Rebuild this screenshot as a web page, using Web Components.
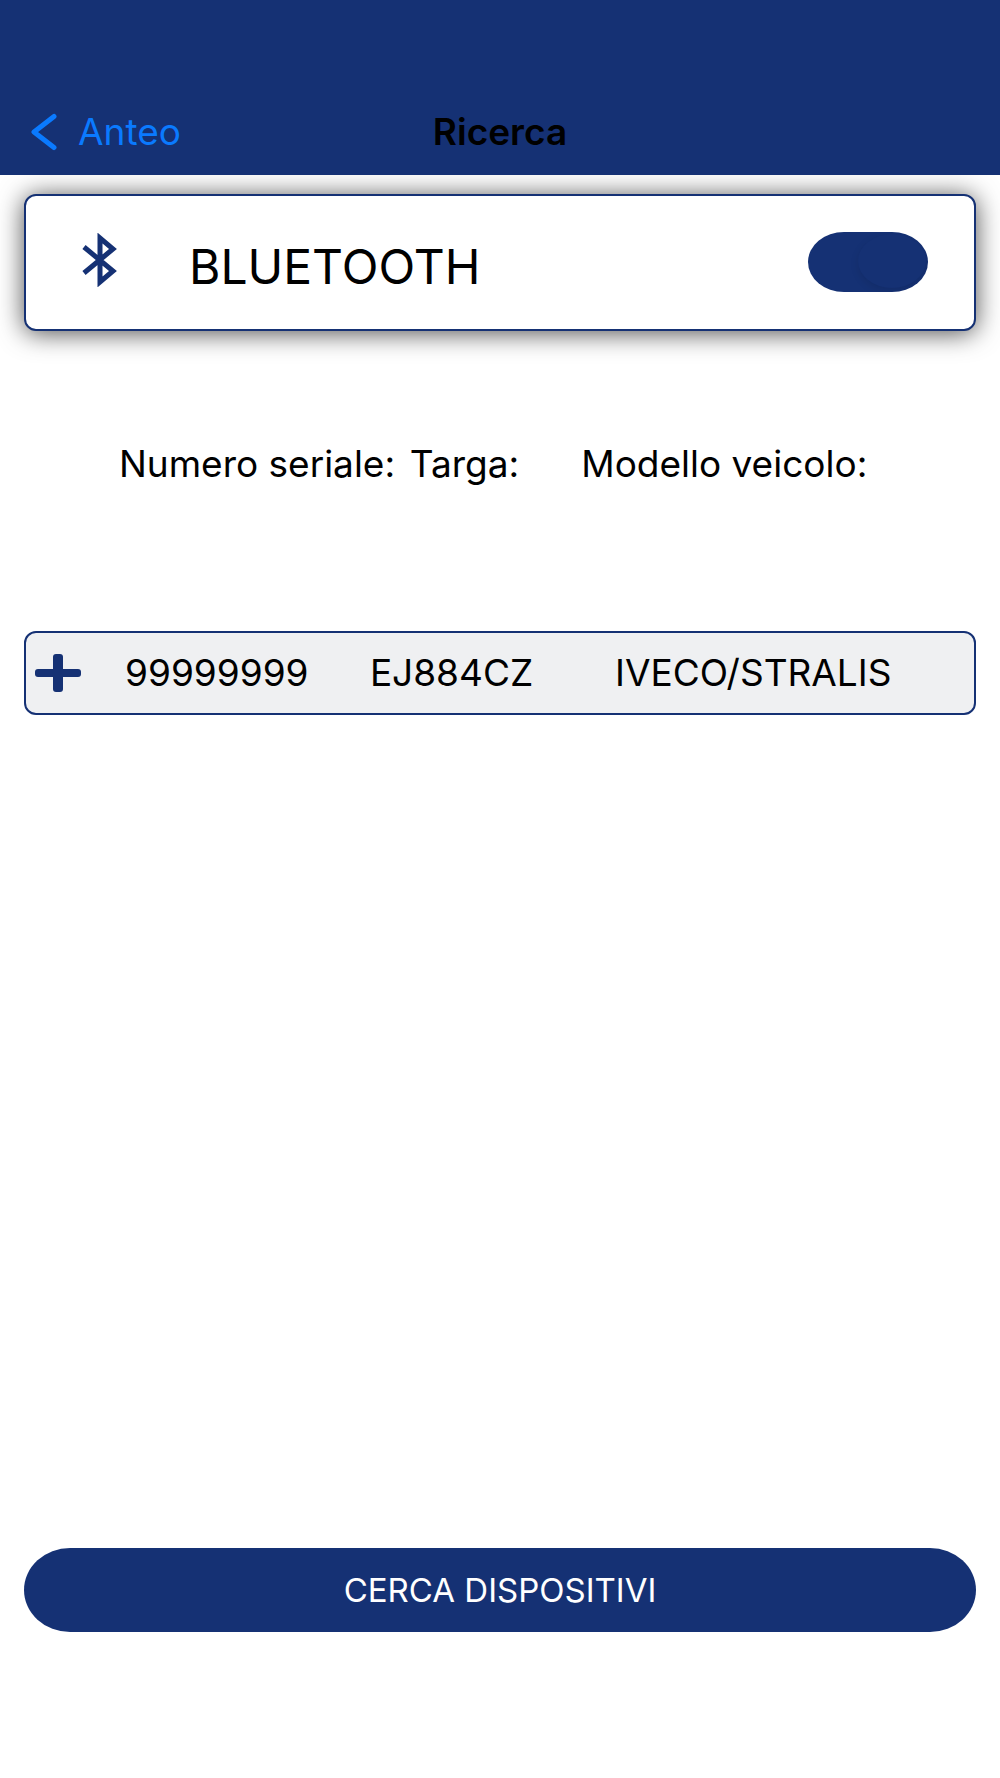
<!doctype html>
<html lang="it">
<head>
<meta charset="utf-8">
<meta name="viewport" content="width=device-width, initial-scale=1">
<title>Ricerca</title>
<style>
html, body {
	height: 100%;
	margin: 0;
}
body {
	--brand: #153174;
	--link: #0a7aff;
	--gutter: 24px;
	background: #fff;
	color: #000;
	font: 37px/40px Inter, "Liberation Sans", sans-serif;
}
</style>
</head>
<body>
<an-screen>
	<an-nav-bar slot="bar" back="Anteo">Ricerca</an-nav-bar>
	<an-bluetooth on>BLUETOOTH</an-bluetooth>
	<an-devices>
		<an-device serial="99999999" plate="EJ884CZ" model="IVECO/STRALIS"></an-device>
	</an-devices>
	<an-action slot="foot">CERCA DISPOSITIVI</an-action>
</an-screen>

<script>
const html = (strings, ...parts) => {
	const tpl = document.createElement('template')
	tpl.innerHTML = String.raw({ raw: strings }, ...parts)
	return tpl
}
const withTemplate = (ele, tpl) => {
	ele.attachShadow({ mode: 'open' }).append(tpl.content.cloneNode(true))
	ele.shadowRoot.querySelectorAll('[id]')
		.forEach(e => Object.defineProperty(ele, `$${e.id}`, { value: e }))
}

const screen = html`
<style>
:host {
	display: flex;
	flex-direction: column;
	min-height: 100%;
}
main {
	display: flex;
	flex: 1;
	flex-direction: column;
	gap: 113px;
	padding: 19px var(--gutter);
}
footer { padding: 0 var(--gutter) 146px; }
</style>
<slot name="bar"></slot>
<main><slot></slot></main>
<footer><slot name="foot"></slot></footer>`

customElements.define('an-screen', class extends HTMLElement {
	constructor() {
		super()
		withTemplate(this, screen)
	}
})

const navBar = html`
<style>
:host {
	display: block;
	position: relative;
	z-index: 1;
	background: var(--brand);
}
header {
	display: grid;
	grid-template-columns: 1fr auto 1fr;
	align-items: center;
	padding: 112px 30px 23px;
}
a {
	display: flex;
	align-items: center;
	gap: 20px;
	color: var(--link);
	text-decoration: none;
}
svg {
	width: 28px;
	height: 38px;
}
h1 {
	margin: 0;
	font-size: inherit;
	font-weight: 600;
}
</style>
<header>
	<a href="#">
		<svg viewBox="0 0 28 38" fill="none" stroke="currentColor" stroke-width="5" stroke-linecap="round" stroke-linejoin="round" aria-hidden="true"><path d="M24 3.5 4 19 24 34.500"/></svg>
		<span id="back"></span>
	</a>
	<h1><slot></slot></h1>
</header>`

customElements.define('an-nav-bar', class extends HTMLElement {
	constructor() {
		super()
		withTemplate(this, navBar)
	}

	connectedCallback() {
		this.$back.textContent = this.getAttribute('back')
	}
})

const bluetooth = html`
<style>
:host {
	display: flex;
	align-items: center;
	box-sizing: border-box;
	min-height: 137px;
	padding: 0 46px 2px 56px;
	border: 2px solid var(--brand);
	border-radius: 12px;
	background: #fff;
	box-shadow: 0 2px 26px rgba(0, 0, 0, 0.7);
	font-size: 48px;
	line-height: 52px;
}
svg {
	width: 35px;
	height: 54px;
	margin-right: 72px;
	padding-bottom: 4px;
	color: var(--brand);
}
label {
	flex: 1;
	padding-top: 10px;
}
input {
	appearance: none;
	display: flex;
	justify-content: flex-end;
	width: 120px;
	height: 60px;
	margin: 0;
	overflow: hidden;
	border-radius: 36px / 30px;
	background: #999;
}
input::before {
	content: "";
	width: 68px;
	height: 54px;
	margin: 2px;
	border-radius: 50%;
	background: var(--brand);
	box-shadow: 0 3px 8px rgba(0, 0, 0, 0.1);
}
input:not(:checked) { justify-content: flex-start; }
input:checked { background: var(--brand); }
</style>
<svg viewBox="0 0 35 54" fill="none" stroke="currentColor" stroke-width="5" aria-hidden="true">
	<path d="M2 14 31 38 18 49V5L31 16 2 40"/>
</svg>
<label for="toggle"><slot></slot></label>
<input id="toggle" type="checkbox" role="switch" aria-label="Bluetooth">`

customElements.define('an-bluetooth', class extends HTMLElement {
	constructor() {
		super()
		withTemplate(this, bluetooth)
	}

	connectedCallback() {
		this.$toggle.checked = this.hasAttribute('on')
	}
})

const devices = html`
<style>
:host { display: block; }
table, thead, tbody { display: block; }
tr {
	display: grid;
	align-items: center;
}
/* first track holds the add button, last one is the right margin */
thead tr { grid-template-columns: 95fr 276fr 140fr 380fr 62fr; }
tbody tr {
	grid-template-columns: 93fr 196fr 274fr 330fr 56fr;
	min-height: 80px;
	border: 2px solid var(--brand);
	border-radius: 12px;
	background: #eff0f2;
}
tbody { padding-top: 147px; }
th, td {
	min-width: 0;
	padding: 0;
	font-weight: 400;
	text-align: center;
	white-space: nowrap;
}
td:first-child { text-align: left; }
button {
	display: block;
	padding: 0 9px;
	border: 0;
	background: none;
	color: var(--brand);
}
svg {
	display: block;
	width: 46px;
	height: 38px;
}
</style>
<table>
	<thead>
		<tr><td></td><th scope="col">Numero seriale:</th><th scope="col">Targa:</th><th scope="col">Modello veicolo:</th></tr>
	</thead>
	<tbody id="rows"></tbody>
</table>`

const row = html`
<tr>
	<td>
		<button type="button" aria-label="Aggiungi">
			<svg viewBox="0 0 46 38" fill="currentColor" aria-hidden="true">
				<rect y="15" width="46" height="8" rx="3"/>
				<rect x="18" width="10" height="38" rx="3"/>
			</svg>
		</button>
	</td>
</tr>`

customElements.define('an-device', class extends HTMLElement {
	get cells() {
		return ['serial', 'plate', 'model'].map(name => this.getAttribute(name))
	}
})

customElements.define('an-devices', class extends HTMLElement {
	constructor() {
		super()
		withTemplate(this, devices)
	}

	connectedCallback() {
		this.update()
	}

	update() {
		this.$rows.replaceChildren(...[...this.querySelectorAll('an-device')].map(device => {
			const tr = row.content.querySelector('tr').cloneNode(true)
			device.cells.forEach(text => {
				tr.insertCell().textContent = text
			})
			return tr
		}))
	}
})

const action = html`
<style>
:host { display: block; }
button {
	display: block;
	width: 100%;
	min-height: 84px;
	padding: 0;
	border: 0;
	border-radius: 46px / 42px;
	background: var(--brand);
	color: #fff;
	font: inherit;
	font-size: 33px;
}
</style>
<button type="button"><slot></slot></button>`

customElements.define('an-action', class extends HTMLElement {
	constructor() {
		super()
		withTemplate(this, action)
	}
})
</script>
</body>
</html>
